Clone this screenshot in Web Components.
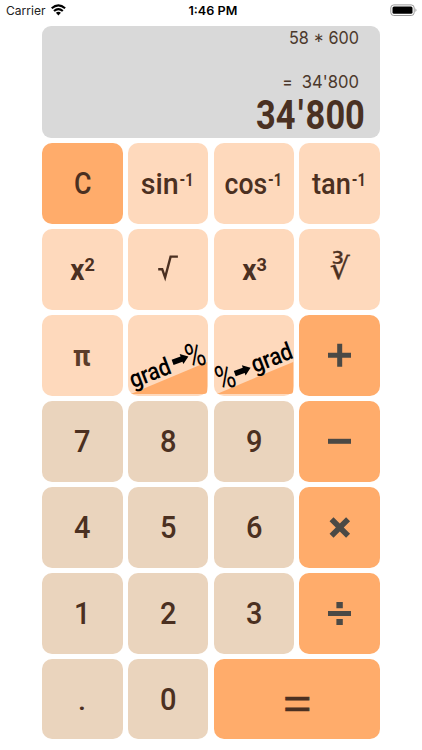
<!DOCTYPE html>
<html lang="en"><head><meta charset="utf-8"><title>Calculator</title>
<style>html,body{margin:0;background:#fff}body{width:422px;height:750px;overflow:hidden}</style></head>
<body><calc-app></calc-app>
<script>
const svgText = (s, x, y, size, len, extra = '') =>
  `<text x="${x}" y="${y}" font-size="${size}" textLength="${len}" lengthAdjust="spacingAndGlyphs" ${extra}>${s}</text>`;

class StatusBar extends HTMLElement {
  connectedCallback() {
    this.attachShadow({mode: 'open'}).innerHTML = `<style>
      :host{display:block;height:26px;font-family:Inter,"Liberation Sans",sans-serif}
      svg{display:block}</style>
      <svg width="422" height="26" viewBox="0 0 422 26">
        ${svgText('Carrier', 6, 15, 12, 39.5, 'fill="#222"')}
        <g fill="none" stroke="#000" stroke-width="2.1"><path d="M51.7 8.3Q58.4 2.4 65.1 8.3"/><path d="M54 11Q58.4 7.1 62.8 11"/></g>
        <path d="M55.9 12.8Q58.4 10.9 60.9 12.8L58.4 15.5Z"/>
        ${svgText('1:46 PM', 188.5, 15, 12, 48.8, 'font-weight="600"')}
        <rect x="390.8" y="4.9" width="23.4" height="10.6" rx="3" fill="none" stroke="#999" stroke-width="1"/>
        <rect x="392.5" y="6.6" width="20" height="7.2" rx="1.5"/><path d="M415.3 8.3Q417.8 10.2 415.3 12.1Z" fill="#aaa"/>
      </svg>`;
  }
}
class CalcDisplay extends HTMLElement {
  connectedCallback() {
    const xs = [256, 275.8, 298, 305.4, 325.4, 345].map(v => (v / .84).toFixed(2)).join(' ');
    this.attachShadow({mode: 'open'}).innerHTML = `<style>
      :host{display:block;height:112.3px;background:#d9d9d9;border-radius:9px;font-family:Inter,"Liberation Sans",sans-serif}
      svg{display:block}</style>
      <svg width="338" height="112" viewBox="42 26 338 112" fill="#4b382b">
        ${svgText('58 * 600', 289, 43.6, 17.5, 70)}
        ${svgText('=', 282.3, 88.4, 17.5, 10.5)}
        ${svgText("34'800", 301.8, 88.4, 17.5, 57.2)}
        <text transform="scale(.84 1)" x="${xs}" y="129" font-size="41" font-family="Roboto,sans-serif" font-weight="700" fill="#4a3122">34'800</text>
      </svg>`;
  }
}
const arrow = 'M0 -2.8H9.5V-5.4L16.8 0L9.5 5.4V2.8H0Z';
const sup = (s, x, len) => svgText(s, x, 43, 18, len, 'font-weight="700"');
const pow = s => svgText('x', 28.2, 51, 30, 14.2, 'font-weight="700"') + svgText(s, 42.6, 42, 18.5, 10.4, 'font-weight="700"');
const triangle = '<path d="M2.8 79L79.2 46.9V75.5Q79.2 79 75.7 79Z" fill="#ffac6b"/>';
const at = (x, y, deg, inner) => `<g transform="translate(${x} ${y}) rotate(${deg})">${inner}</g>`;
const grad = svgText('grad', 0, 0, 24.5, 42.5);
const pct = svgText('%', 0, 0, 34, 19.5, 'font-weight="400"');
const faces = {
  C: svgText('C', 32, 51, 30.5, 17.5),
  sin: svgText('sin', 12.8, 51, 30, 38) + sup('-1', 51.5, 14),
  cos: svgText('cos', 10.6, 51, 30, 42.6) + sup('-1', 54.1, 14),
  tan: svgText('tan', 13, 51, 30, 38.9) + sup('-1', 52.7, 14),
  sq: pow('2'),
  cube: pow('3'),
  root: '<path fill="none" stroke="#4b3021" stroke-width="2.4" d="M30.2 40.2H34.2L37.1 48.5L42.6 27.6H49.9"/>',
  cbrt: svgText('∛', 30.8, 50, 30, 20, 'font-family="DejaVu Sans,sans-serif" font-weight="400" stroke="#4b3021" stroke-width=".4"'),
  pi: svgText('π', 31, 51, 30, 17.5, 'font-weight="700" fill="#5c3c2a"'),
  gp: triangle + '<g fill="#000">' + at(5, 73.2, -21, grad) + at(44.6, 47.3, -20, `<path d="${arrow}"/>`) + at(61, 54, -16, pct) + '</g>',
  pg: triangle + '<g fill="#000">' + at(5, 76, -16, pct) + at(20.8, 58.6, -20, `<path d="${arrow}"/>`) + at(40.8, 58, -21, grad) + '</g>',
  plus: '<path fill="#4b4945" d="M29 37.7H38.2V28.8H43.2V37.7H52V42.7H43.2V51.7H38.2V42.7H29Z"/>',
  minus: '<path fill="#4b4945" d="M29 37.8H52V42.8H29Z"/>',
  times: '<path fill="#4b4945" transform="rotate(45 40.8 40.5)" d="M29.1 37.7H38V28.8H43.6V37.7H52.5V43.3H43.6V52.2H38V43.3H29.1Z"/>',
  div: '<path fill="#4b4945" d="M29 38H52V43H29ZM37.4 29H43.8V35.2H37.4ZM37.4 45.9H43.8V52.1H37.4Z"/>',
  eq: svgText('=', 69.2, 58.6, 42, 28, 'font-family="Liberation Sans,sans-serif" font-weight="400" stroke="#4b3021" stroke-width=".7"'),
  dot: svgText('.', 36.1, 51.2, 28, 8)
};
class CalcKey extends HTMLElement {
  connectedCallback() {
    const k = this.getAttribute('face'), wide = this.hasAttribute('wide');
    const w = wide ? 166.6 : 80.8;
    this.attachShadow({mode: 'open'}).innerHTML = `<style>
      :host{display:block;height:80.8px;border-radius:10px;background:#fed9bc;font-family:Roboto,sans-serif}
      :host([tone=hot]){background:#ffac6b}
      :host([tone=num]){background:#ead4bd}
      :host([wide]){grid-column:span 2}
      svg{display:block;overflow:visible}</style>
      <svg width="${w}" height="80.8" viewBox="0 0 ${w} 80.8" fill="#4b3021" font-weight="500">${faces[k] || svgText(k, 32, 51.2, 30.8, 16.5)}</svg>`;
  }
}
class CalcApp extends HTMLElement {
  connectedCallback() {
    const keys = ['C:hot','sin','cos','tan','sq','root','cube','cbrt','pi','gp','pg','plus:hot','7:num','8:num','9:num','minus:hot','4:num','5:num','6:num','times:hot','1:num','2:num','3:num','div:hot','dot:num','0:num','eq:hot'];
    this.attachShadow({mode: 'open'}).innerHTML = `<style>
      :host{display:block;width:422px;height:750px;background:#fff}
      main{padding:0 42px}
      .pad{display:grid;grid-template-columns:repeat(4,80.6px);gap:5.1px 5.2px;margin-top:5px}</style>
      <status-bar></status-bar><main><calc-display></calc-display><div class="pad">${keys.map(v => {
        const [f, t] = v.split(':');
        return `<calc-key face="${f}" ${t ? `tone="${t}"` : ''} ${f === 'eq' ? 'wide' : ''}></calc-key>`;
      }).join('')}</div></main>`;
  }
}
customElements.define('status-bar', StatusBar);
customElements.define('calc-display', CalcDisplay);
customElements.define('calc-key', CalcKey);
customElements.define('calc-app', CalcApp);
</script></body></html>
